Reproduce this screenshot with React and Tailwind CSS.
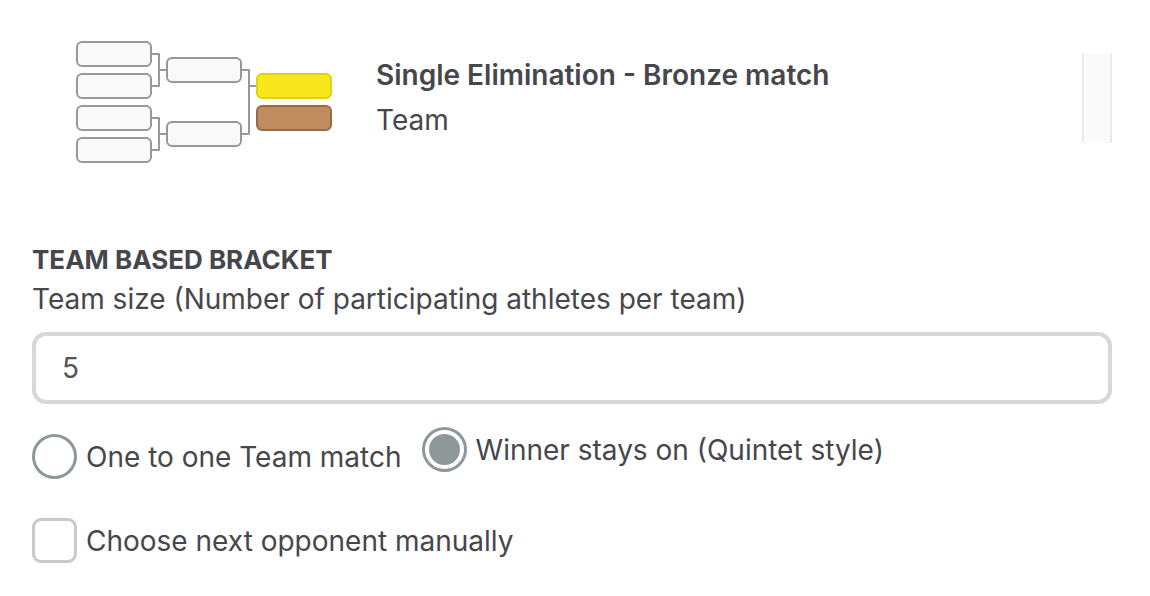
import React, { useState } from 'react';

const FIRST_ROUND = [1, 33, 65, 97];
const SECOND_ROUND = [17, 81];

function BracketIcon() {
  return (
    <svg className="w-64 shrink-0" viewBox="0 0 256 122" fill="none" strokeWidth="2" aria-hidden="true">
      <g stroke="#989898" strokeLinejoin="round">
        <path d="M76 13h7v32h-7M83 29h7" />
        <path d="M76 77h7v32h-7M83 93h7" />
        <path d="M166 29h7v64h-7M173 45h7" />
      </g>
      <g fill="#f9f9f9" stroke="#989898">
        {FIRST_ROUND.map((y) => (
          <rect key={y} x="1" y={y} width="74" height="24" rx="5" />
        ))}
        {SECOND_ROUND.map((y) => (
          <rect key={y} x="91" y={y} width="74" height="24" rx="5" />
        ))}
      </g>
      {/* Gold and bronze matches */}
      <rect x="181" y="33" width="74" height="24" rx="5" fill="#f8e71c" stroke="#dfd019" />
      <rect x="181" y="65" width="74" height="24" rx="5" fill="#c08b5f" stroke="#966b45" />
    </svg>
  );
}

function RadioOption({ label, value, selected, onSelect }) {
  return (
    <label className="flex items-center gap-[9px]">
      <input
        type="radio"
        name="match-style"
        value={value}
        checked={selected}
        onChange={() => onSelect(value)}
        className="size-[45px] shrink-0 appearance-none rounded-full border-3 border-[#8e989b] bg-white bg-clip-content p-1 checked:bg-[#8e989b]"
      />
      {label}
    </label>
  );
}

function App() {
  const [teamSize, setTeamSize] = useState('5');
  const [matchStyle, setMatchStyle] = useState('quintet');
  const [manual, setManual] = useState(false);

  return (
    <main className="bg-white pt-[41px] pr-[38px] pb-8 pl-8 font-['Inter',sans-serif] text-[28px] leading-10 text-[#46464d]">
      {/* Selected bracket type */}
      <section className="flex items-start pl-11">
        <BracketIcon />
        <div className="ml-11 flex-1 pt-3">
          <h1 className="pb-[3px] font-semibold leading-11">Single Elimination - Bronze match</h1>
          <p>Team</p>
        </div>
        <button
          type="button"
          aria-label="Change bracket"
          className="mt-3 h-[90px] w-[30px] border-x-2 border-[#ebebeb] bg-[#fafafa]"
        />
      </section>

      <section className="mt-[78px]">
        <h2 className="text-[26px] font-bold uppercase leading-[38px]">Team based bracket</h2>
        <label htmlFor="team-size" className="block">
          Team size (Number of participating athletes per team)
        </label>
        <input
          id="team-size"
          type="text"
          value={teamSize}
          onChange={(e) => setTeamSize(e.target.value)}
          className="mt-[13px] block h-[72px] w-full rounded-[14px] border-4 border-[#d7d8dc] bg-white px-[26px] text-[#555555] outline-none"
        />

        <div className="mt-[23px] flex items-start gap-5">
          <div className="pt-[7px]">
            <RadioOption
              label="One to one Team match"
              value="one-to-one"
              selected={matchStyle === 'one-to-one'}
              onSelect={setMatchStyle}
            />
          </div>
          <RadioOption
            label="Winner stays on (Quintet style)"
            value="quintet"
            selected={matchStyle === 'quintet'}
            onSelect={setMatchStyle}
          />
        </div>

        <label className="mt-[39px] flex items-center gap-[9px]">
          <input
            type="checkbox"
            checked={manual}
            onChange={(e) => setManual(e.target.checked)}
            className="size-[45px] shrink-0 appearance-none rounded-[9px] border-3 border-[#c9c9ce] bg-white checked:bg-[#8e989b]"
          />
          Choose next opponent manually
        </label>
      </section>
    </main>
  );
}

export default App;
